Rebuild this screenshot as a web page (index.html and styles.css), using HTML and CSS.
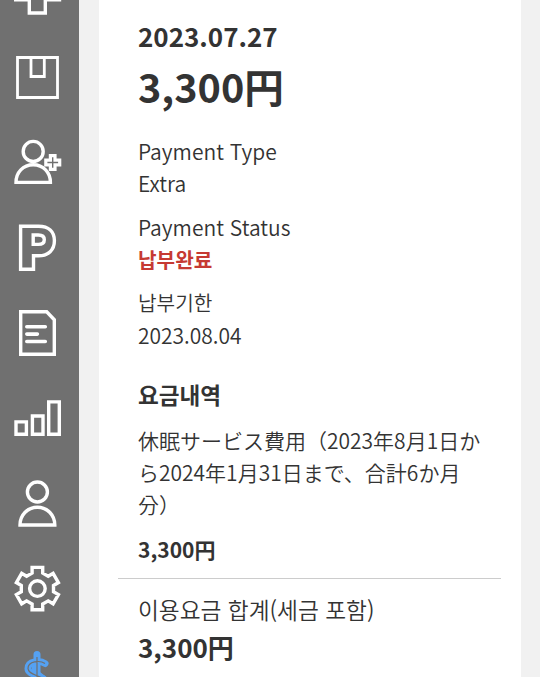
FILE: index.html
```html
<!DOCTYPE html>
<html lang="ko">
<head>
    <meta charset="UTF-8">
    <meta name="viewport" content="width=device-width, initial-scale=1.0">
    <title>Payment</title>
    <link rel="stylesheet" href="styles.css">
</head>
<body>
    <!-- Side menu -->
    <nav class="sidebar">
        <svg class="icon" viewBox="0 0 48 48"><path d="M15.3 1.5h16v14h14.2v17.3H31.3V46h-16V32.8H1.5V15.5h13.8z"/></svg>
        <svg class="icon thin" viewBox="0 0 48 48"><path d="M3.5 5.5h40v40h-40zM17 5.5v19h13.3v-19"/></svg>
        <svg class="icon" viewBox="0 0 48 48">
            <circle cx="19.2" cy="13.4" r="10"/>
            <path d="M2 44.4C2 34.5 9 26.8 19.2 26.8S36.4 34.5 36.4 44.4z"/>
            <path class="plus" d="M36.4 17.7h4.6v4.5h4.7v4.6H41v4.6h-4.6v-4.6h-4.6v-4.6h4.6z"/>
        </svg>
        <svg class="icon" viewBox="0 0 48 48">
            <path d="M6.6 3.2h18c10 0 15.8 5.5 15.8 14.6s-6 15-15.8 15h-5.1v13.5H6.6z"/>
            <path d="M19.2 12h5.1c3.8 0 6 1.6 6 4.7s-2.2 4.7-6 4.7h-5.1z"/>
        </svg>
        <svg class="icon" viewBox="0 0 48 48">
            <path d="M6.7 3.8h26l7.6 8v34.5H6.7z"/>
            <path class="lines" d="M12.8 18.8h18.5M12.8 26.1h10.6M12.8 33.5h18.5"/>
        </svg>
        <svg class="icon" viewBox="0 0 48 48"><path d="M2 27.9h10.4v12.4H2zM18.4 22h10.6v18.3H18.4zM34.7 7.9h10.6v32.4H34.7z"/></svg>
        <svg class="icon" viewBox="0 0 48 48">
            <circle cx="23.4" cy="13" r="10"/>
            <path d="M6 46C6 36.3 13.2 28.2 23.4 28.2S40.8 36.3 40.8 46z"/>
        </svg>
        <svg class="icon" viewBox="0 0 48 48">
            <g transform="translate(23.4 24.6)">
                <circle r="7.8"/>
                <path d="M-5.3-15.5V-21.2H5.3V-15.5L10.8-12.3 15.7-15.2 21-6 16.1-3.2V3.2L21 6 15.7 15.2 10.8 12.3 5.3 15.5V21.2H-5.3V15.5L-10.8 12.3-15.7 15.2-21 6-16.1 3.2V-3.2L-21-6-15.7-15.2-10.8-12.3z"/>
            </g>
        </svg>
        <svg class="icon" viewBox="0 0 48 48">
            <path class="dollar" d="M23 4.5v39M31 13.5C26 10 14 11 14 18.5S32 25 32 34 19 40 14 36.5"/>
            <path class="dollar-fill" d="M18 16h8v6l9 7H18z"/>
            <path class="dollar-inner" d="M23 7v36M31 13.5C26 10 14 11 14 18.500S32 25 32 34 19 40 14 36.500"/>
        </svg>
    </nav>

    <main class="card">
        <section class="detail">
            <p class="date">2023.07.27</p>
            <p class="amount">3,300円</p>

            <dl class="info">
                <dt>Payment Type</dt>
                <dd>Extra</dd>
                <dt>Payment Status</dt>
                <dd class="korean paid">납부완료</dd>
                <dt class="korean">납부기한</dt>
                <dd>2023.08.04</dd>
            </dl>

            <h2 class="heading">요금내역</h2>
            <p class="item">休眠サービス費用（2023年8月1日から2024年1月31日まで、合計6か月分）</p>
            <p class="price">3,300円</p>
        </section>

        <section class="total">
            <p class="total-label">이용요금 합계(세금 포함)</p>
            <p class="total-price">3,300円</p>
        </section>
    </main>
</body>
</html>
```
FILE: styles.css
```css
* {
    box-sizing: border-box;
}

body {
    display: flex;
    height: 677px;
    margin: 0;
    overflow: hidden;
    background-color: #f1f1f1;
    color: #333;
    font-family: "Noto Sans CJK JP", "Noto Sans CJK KR", sans-serif;
    font-size: 21px;
    font-weight: 350;
    line-height: 32px;
}

p, h2, dl, dd {
    margin: 0;
}

/* Side menu */
.sidebar {
    display: flex;
    flex-direction: column;
    flex: none;
    gap: 37.33px;
    width: 79px;
    margin-top: -33px;
    padding-left: 14px;
    background-color: #707070;
}

.icon {
    flex: none;
    width: 48px;
    height: 48px;
    fill: none;
    stroke: #fff;
    stroke-width: 3.4;
}

.thin {
    stroke-width: 2.8;
}

.plus {
    stroke-width: 3.2;
}

.lines {
    stroke-width: 3.6;
    stroke-linecap: round;
}

.dollar {
    stroke: #55a1f2;
    stroke-width: 7;
    stroke-linecap: round;
}

.dollar-fill {
    fill: #55a1f2;
    stroke: none;
}

.dollar-inner {
    stroke: #707070;
    stroke-width: 1.2;
}

/* Payment detail */
.card {
    width: 422px;
    margin-left: 20px;
    padding: 0 20px 0 19px;
    background-color: #fff;
}

.detail {
    height: 579px;
    padding: 18px 20px 0;
    border-bottom: 1px solid #ccc;
}

.date {
    font-size: 26px;
    font-weight: bold;
    line-height: 36px;
}

.amount {
    font-size: 39.6px;
    font-weight: bold;
    line-height: 63px;
}

.info {
    margin-top: 18px;
}

.info dd {
    margin-bottom: 12px;
}

.korean {
    font-size: 20.2px;
    line-height: 33px;
}

.info .paid {
    margin-bottom: 10px;
    color: #c63a33;
    font-weight: bold;
}

.heading {
    margin-top: 28px;
    font-size: 22.6px;
    line-height: 32px;
}

.item {
    margin-top: 13px;
}

.price {
    margin-top: 13px;
    font-weight: bold;
}

.total {
    padding: 15px 20px 0;
}

.total-label {
    font-size: 22.7px;
}

.total-price {
    font-size: 26px;
    font-weight: bold;
    line-height: 42px;
}
```
